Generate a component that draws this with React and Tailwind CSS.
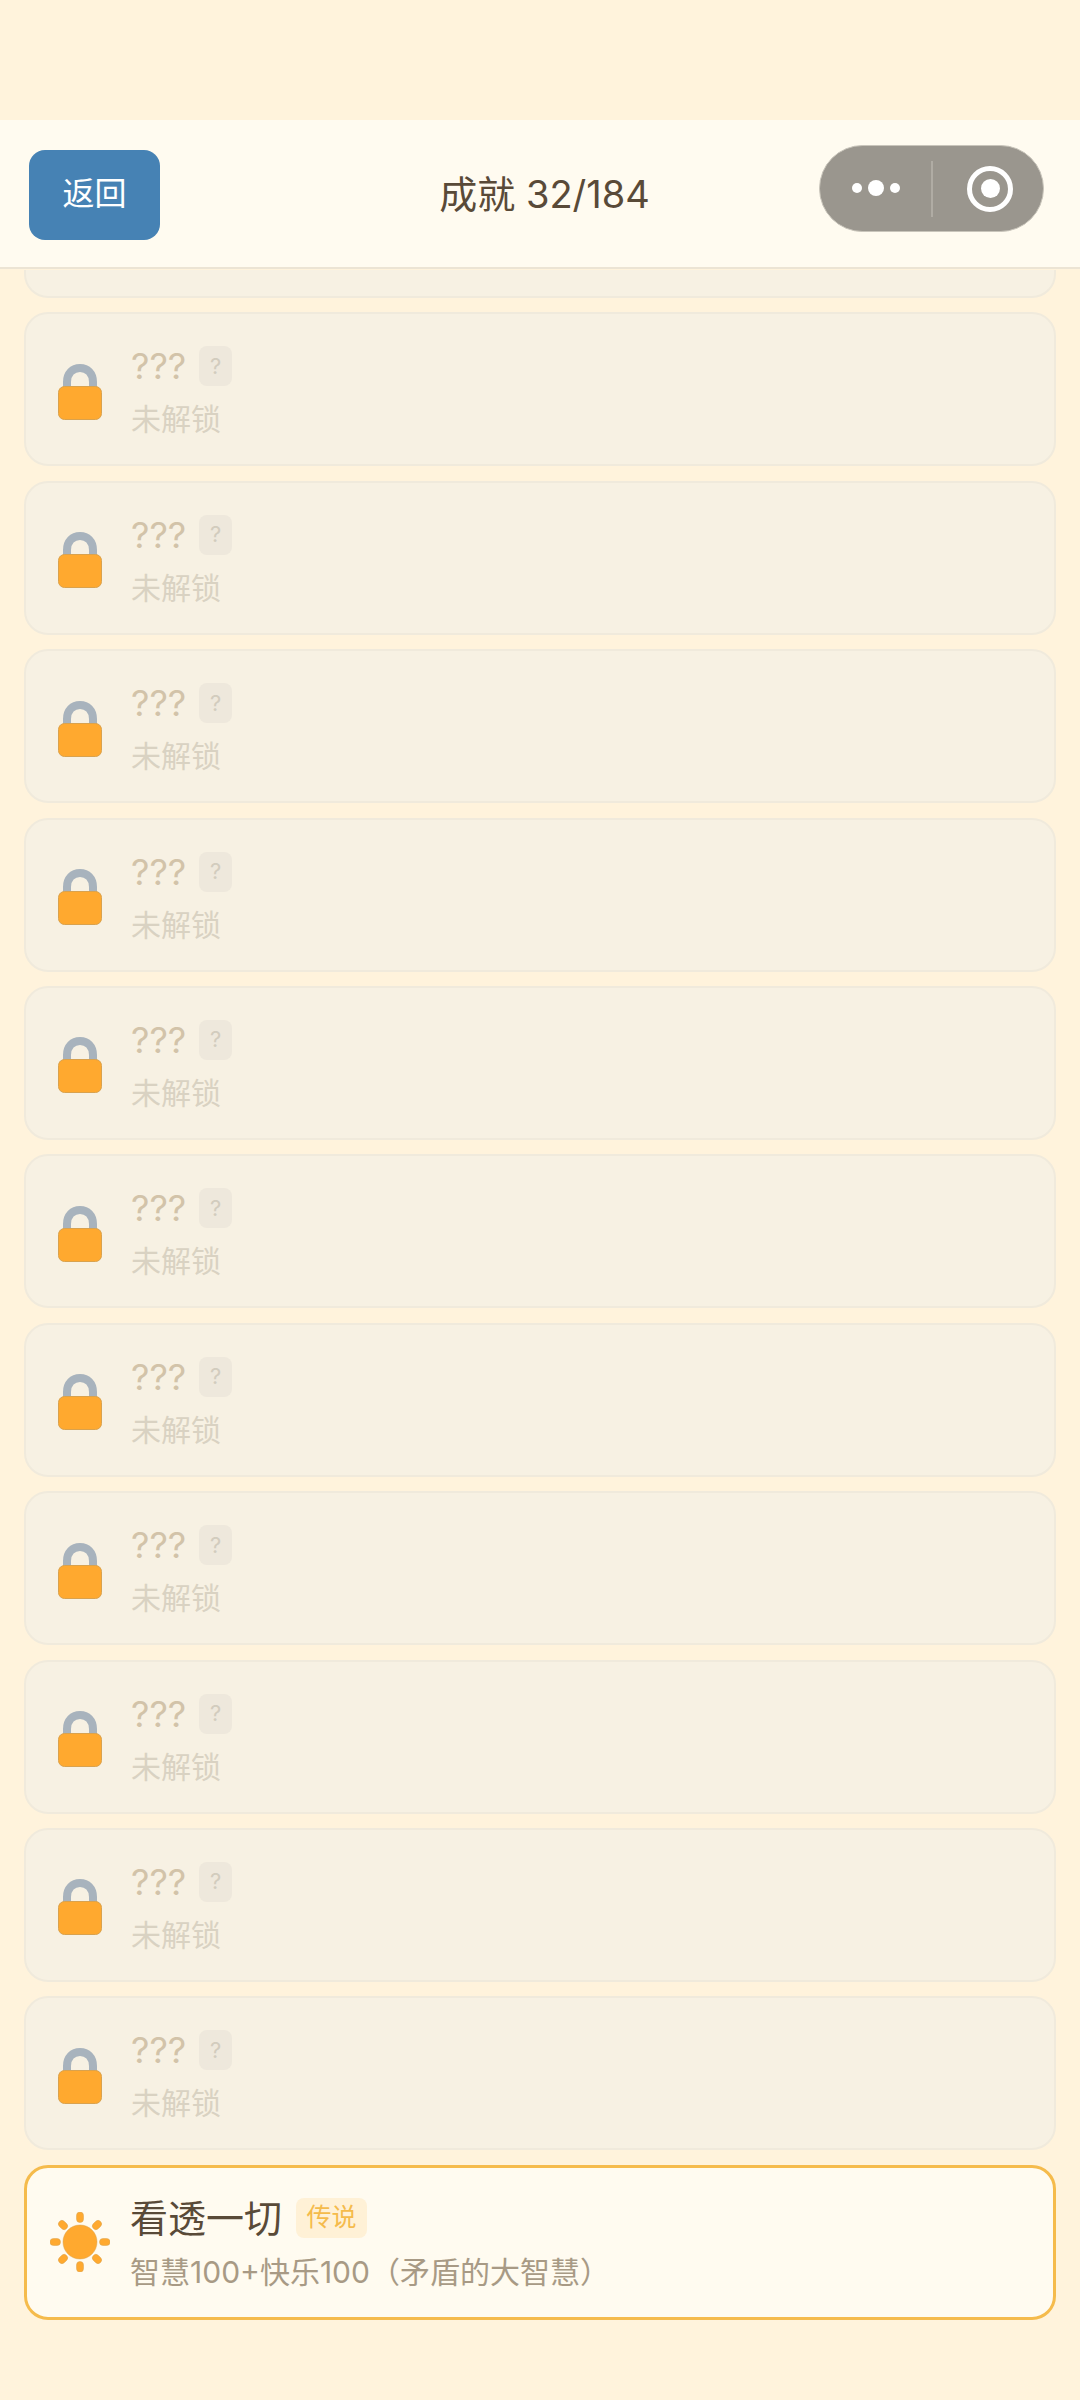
import React from "react";

const FONT = "font-['Inter','Noto_Sans_CJK_SC',sans-serif]";

const LockIcon = () => (
  <svg width="44" height="56" viewBox="0 0 44 56" className="block">
    <path d="M9 26 V18 C9 9.500 14.500 4 22 4 C29.500 4 35 9.500 35 18 V26" fill="none" stroke="#a8b3bd" strokeWidth="8" />
    <rect x="0.500" y="22.500" width="43" height="33" rx="6" fill="#ffa92f" stroke="#d9a24e" strokeWidth="1" />
  </svg>
);

const SunIcon = () => (
  <svg width="60" height="60" viewBox="-30 -30 60 60" className="block">
    {[0, 90, 180, 270].map((deg) => (
      <rect key={deg} x="-3.500" y="-30" width="7" height="10.500" rx="3.500" fill="#ffa92f" stroke="#d9a24e" strokeWidth="0.500" transform={`rotate(${deg})`} />
    ))}
    {[45, 135, 225, 315].map((deg) => (
      <rect key={deg} x="-3.500" y="-29" width="7" height="10" rx="3.500" fill="#ffa92f" stroke="#d9a24e" strokeWidth="0.500" transform={`rotate(${deg})`} />
    ))}
    <circle r="17" fill="#ffa92f" stroke="#d9a24e" strokeWidth="0.500" />
  </svg>
);

const LockedCard = () => (
  <div className="flex h-[154px] shrink-0 items-center rounded-[24px] border-2 border-[#f0eadc] bg-[#f7f1e3] pl-[32px]">
    <div className="flex w-[44px] shrink-0 justify-center pt-[5px]">
      <LockIcon />
    </div>
    <div className="ml-[29px] pt-[7px]">
      <div className="flex h-[40px] items-center">
        <span className="text-[36px] leading-[40px] text-[#d2c3a9]">???</span>
        <span className="ml-[13px] flex h-[40px] w-[33px] items-center justify-center rounded-[8px] bg-[#eee8dc] text-[22px] text-[#d2ccbe]">?</span>
      </div>
      <div className="mt-[13px] text-[30px] leading-[40px] text-[#d9d2c2]">未解锁</div>
    </div>
  </div>
);

export default function App() {
  return (
    <div className={`${FONT} flex h-[2400px] flex-col overflow-hidden bg-[#fff3dc]`}>
      <div className="h-[120px] shrink-0" />
      <header className="relative flex h-[149px] shrink-0 items-center justify-center border-b-2 border-[#ece4d4] bg-[#fffbf0] pl-[9px]">
        <button className="absolute left-[29px] top-[30px] flex h-[90px] w-[131px] items-center justify-center rounded-[16px] bg-[#4682b4] pb-[3px] text-[32px] leading-[40px] text-white">
          返回
        </button>
        <h1 className="text-[38px] font-normal leading-[48px] text-[#594a38]">成就 32/184</h1>
        <div className="absolute left-[819px] top-[25px] flex h-[87px] w-[225px] items-center rounded-full border border-[#c9c5bb] bg-[#9a968e]">
          <div className="flex w-[111px] items-center justify-center gap-[3px] pb-[1px]">
            <span className="h-[10px] w-[10px] rounded-full bg-white" />
            <span className="mx-[3px] h-[16px] w-[16px] rounded-full bg-white" />
            <span className="h-[10px] w-[10px] rounded-full bg-white" />
          </div>
          <div className="h-[56px] w-[2px] bg-[#b0aca4]" />
          <div className="ml-[34px] flex h-[46px] w-[46px] items-center justify-center rounded-full border-[5px] border-white">
            <span className="h-[19px] w-[19px] rounded-full bg-white" />
          </div>
        </div>
      </header>

      <main className="flex flex-col gap-[14.400px] px-[24px] pt-[1px]">
        <div className="h-[28px] rounded-b-[24px] border-2 border-t-0 border-[#f0eadc] bg-[#f7f1e3]" />
        {Array.from({ length: 11 }).map((_, i) => (
          <LockedCard key={i} />
        ))}
        <div className="flex h-[155px] shrink-0 items-center rounded-[24px] border-[3px] border-[#f5bb4c] bg-[#fffbf0] pl-[23px]">
          <SunIcon />
          <div className="ml-[20px] pt-[5px]">
            <div className="flex h-[40px] items-center">
              <span className="text-[38px] leading-[40px] text-[#594a38]">看透一切</span>
              <span className="ml-[14px] flex h-[40px] w-[71px] items-center justify-center rounded-[8px] bg-[#fff1d6] text-[25px] text-[#f5bb4c]">传说</span>
            </div>
            <div className="mt-[14px] text-[30px] leading-[40px] text-[#a89a85]">智慧100+快乐100（矛盾的大智慧）</div>
          </div>
        </div>
      </main>
    </div>
  );
}
